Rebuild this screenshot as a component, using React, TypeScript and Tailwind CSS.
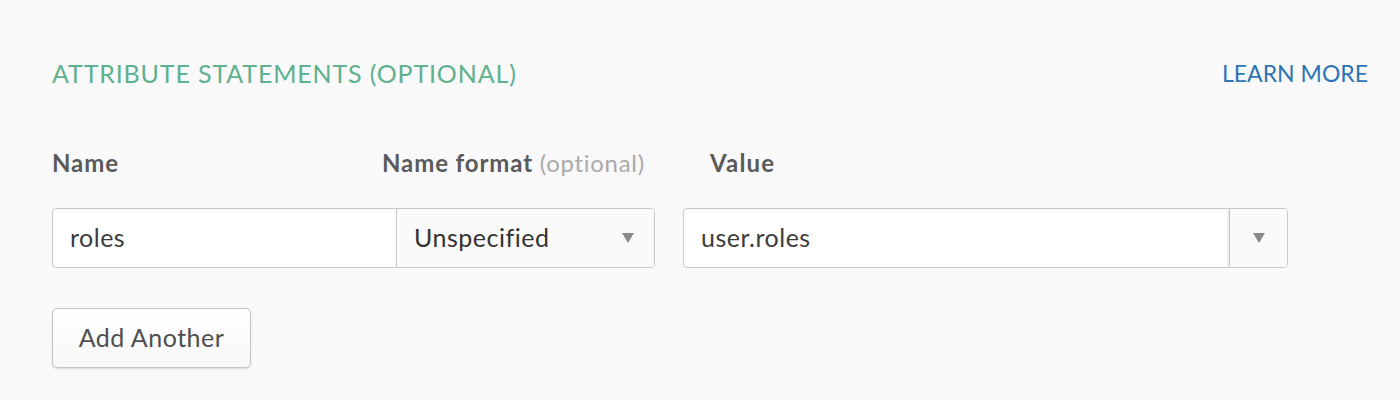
import React from "react";

const font = { fontFamily: '"Lato", "Open Sans", sans-serif' };

function Caret() {
  return (
    <svg width="12" height="10" viewBox="0 0 12 10" className="fill-[#8a8a8a]">
      <path d="M0 0 L12 0 L6 10 Z" />
    </svg>
  );
}

export default function App() {
  return (
    <div className="w-[1400px] h-[400px] bg-[#f9f9f9] text-[#555] overflow-hidden" style={font}>
      <div className="pl-[52px] pr-[32px] pt-[58px]">
        <div className="flex items-center justify-between">
          <div className="text-[25px] text-[#5db18e] tracking-[0.85px] leading-[30px]">ATTRIBUTE STATEMENTS (OPTIONAL)</div>
          <a className="text-[23px] text-[#2d74b4] leading-[30px]">LEARN MORE</a>
        </div>
        <div className="flex mt-[60px] text-[24px] leading-[30px]">
          <div className="w-[330px] font-bold text-[#5a5a5a] tracking-[0.9px]">Name</div>
          <div className="w-[328px] font-bold text-[#5a5a5a] tracking-[0.9px]">
            Name format <span className="font-normal text-[#aaa] tracking-[0.7px]">(optional)</span>
          </div>
          <div className="font-bold text-[#5a5a5a] tracking-[1.2px]">Value</div>
        </div>
        <div className="flex mt-[30px] h-[60px] text-[25px] tracking-[0.5px]">
          <div className="flex w-[603px] rounded-[4px] border border-[#c8c8c8] bg-white overflow-hidden">
            <div className="w-[344px] flex items-center pl-[17px] text-[#3c3c3c] border-r border-[#c8c8c8]">roles</div>
            <div className="flex-1 flex items-center justify-between pl-[17px] pr-[20px] bg-[#fafafa] text-[#333]">
              <span>Unspecified</span>
              <Caret />
            </div>
          </div>
          <div className="ml-[28px] flex w-[605px] rounded-[4px] border border-[#c8c8c8] bg-white overflow-hidden">
            <div className="flex-1 flex items-center pl-[17px] text-[#3c3c3c]">user.roles</div>
            <div className="w-[58px] flex items-center justify-center border-l border-[#c8c8c8] bg-[#fafafa] shadow-[-1px_0_2px_rgba(0,0,0,0.12)]">
              <Caret />
            </div>
          </div>
        </div>
        <button className="mt-[40px] w-[199px] h-[60px] rounded-[5px] border border-[#c4c4c4] bg-gradient-to-b from-white to-[#f7f7f7] shadow-[0_1px_2px_rgba(0,0,0,0.12)] text-[25px] tracking-[0.5px] text-[#4e4e4e]">
          Add Another
        </button>
      </div>
    </div>
  );
}
